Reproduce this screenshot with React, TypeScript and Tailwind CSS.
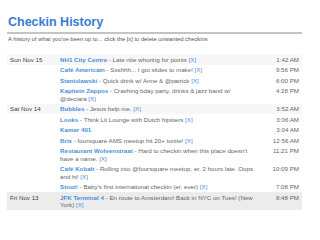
import React from "react";

type Checkin = {
  day?: string;
  venue: string;
  note?: string;
  time: string;
  shaded?: boolean;
};

const checkins: Checkin[] = [
  { day: "Sun Nov 15", venue: "NH1 City Centre", note: "Late nite whoring for points", time: "1:42 AM", shaded: true },
  { venue: "Café Americain", note: "Ssshhh... I got slides to make!", time: "9:56 PM" },
  { venue: "Stanislawski", note: "Quick drink w/ Anne & @patrick", time: "6:00 PM" },
  { venue: "Kapitein Zeppos", note: "Crashing bday party, drinks & jazz band w/ @deciara", time: "4:28 PM" },
  { day: "Sat Nov 14", venue: "Bubbles", note: "Jesus help me.", time: "3:52 AM", shaded: true },
  { venue: "Looks", note: "Think Lit Lounge with Dutch hipsters", time: "3:06 AM" },
  { venue: "Kamer 401", time: "3:04 AM" },
  { venue: "Brix", note: "foursquare AMS meetup hit 20+ tonite!", time: "12:56 AM" },
  { venue: "Restaurant Wolvenstraat", note: "Hard to checkin when this place doesn't have a name.", time: "11:21 PM" },
  { venue: "Café Kobalt", note: "Rolling into @foursquare meetup, er, 2 hours late. Oops and hi!", time: "10:09 PM" },
  { venue: "Stout!", note: "Baby's first international checkin (er, ever)", time: "7:08 PM" },
  { day: "Fri Nov 13", venue: "JFK Terminal 4", note: "En route to Amsterdam! Back in NYC on Tues! (New York)", time: "8:48 PM", shaded: true },
];

export default function App() {
  return (
    <div className="w-[320px] h-[240px] bg-white overflow-hidden font-['Liberation_Sans',Arial,sans-serif]">
      <div className="w-[295px] ml-[7px] pt-[14px]">
        {/* Header */}
        <h1 className="text-[12.5px] leading-[16px] font-bold text-[#3b7bd4] pl-[1px]">Checkin History</h1>
        <div className="h-[2px] bg-[#c4c4c4] mt-[2px]"></div>
        <p className="text-[5.8px] leading-[8px] text-[#555] pl-[1px] mt-[1px]">
          A history of what you've been up to... click the [x] to delete unwanted checkins
        </p>

        {/* Checkins table */}
        <table className="w-full mt-[11px] border-collapse text-[6.2px] leading-[7.5px]">
          <tbody>
            {checkins.map((c, i) => (
              <tr key={i} className={c.shaded ? (c.day === "Fri Nov 13" ? "bg-[#ececec]" : "bg-[#f7f7f7]") : ""}>
                <td className="w-[53px] align-top pl-[3px] py-[1.5px] text-[#444] whitespace-nowrap">{c.day}</td>
                <td className="align-top py-[1.5px] pr-[6px] text-[#666]">
                  <span className="font-bold text-[#4a90d9]">{c.venue}</span>
                  {c.note && (
                    <>
                      {" - "}
                      {c.note} <span className="text-[#4a90d9]">[X]</span>
                    </>
                  )}
                </td>
                <td className="w-[40px] align-top text-right pr-[3px] py-[1.5px] text-[#666] whitespace-nowrap">{c.time}</td>
              </tr>
            ))}
          </tbody>
        </table>
      </div>
    </div>
  );
}
